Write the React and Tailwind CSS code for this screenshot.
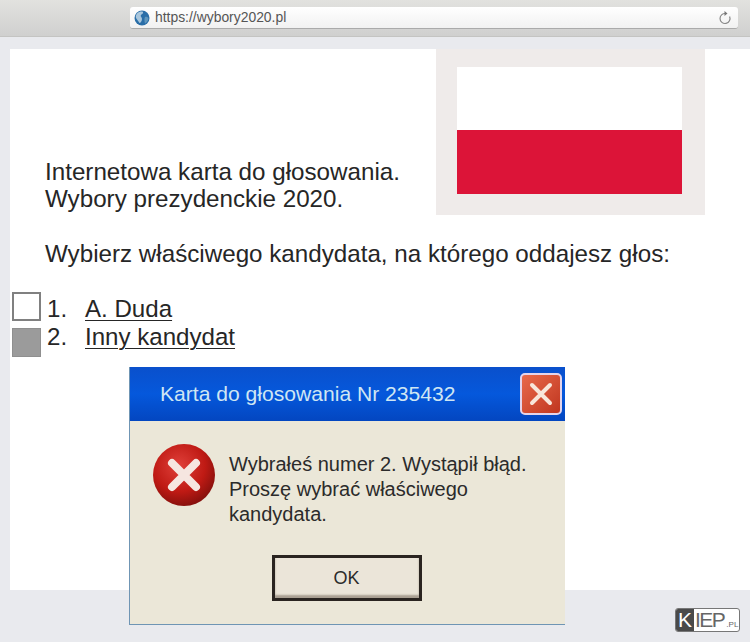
import React from 'react';

function Globe() {
  return (
    <svg width="16" height="16" viewBox="0 0 16 16" className="shrink-0">
      <circle cx="8" cy="8" r="7.5" fill="#2a6ea8" />
      <path d="M3 3.5 C5 1.5 8 1 9 2 C9.5 3.5 8 4 7 5 C6 6.5 8 7 8 9 C8 11 6.5 13 5.5 13 C4.5 11 3 10 2 8 C1.5 6 2 5 3 3.5 Z" fill="#a9c6dc" />
      <path d="M11 7 C12.5 6.5 14 7 14.5 8.5 C14 11 12.5 13 11 13.5 C10.5 11.5 10 9 11 7 Z" fill="#5f96bd" />
    </svg>
  );
}

function Reload() {
  return (
    <svg width="14" height="16" viewBox="0 0 14 16" fill="none" className="shrink-0">
      <path d="M8 3.6 A5 5 0 1 0 11.6 6.5" stroke="#8a8a8a" strokeWidth="1.2" />
      <path d="M6.5 1 L9.5 3.6 L6.5 6 Z" fill="#777" />
    </svg>
  );
}

function ErrorIcon() {
  return (
    <svg width="64" height="64" viewBox="0 0 64 64" className="shrink-0">
      <defs>
        <radialGradient id="err" cx="42%" cy="35%" r="70%">
          <stop offset="0%" stopColor="#e0403a" />
          <stop offset="60%" stopColor="#bf1a14" />
          <stop offset="100%" stopColor="#7e0f0c" />
        </radialGradient>
      </defs>
      <circle cx="32" cy="32" r="31" fill="url(#err)" />
      <path d="M20 20 L44 44 M44 20 L20 44" stroke="#f6e6e0" strokeWidth="8" strokeLinecap="round" />
    </svg>
  );
}

function CloseButton() {
  return (
    <div className="flex h-[42px] w-[42px] items-center justify-center rounded-[5px] border-2 border-[#e4d4ea] bg-gradient-to-br from-[#e8694a] to-[#c0351f]">
      <svg width="28" height="28" viewBox="0 0 28 28">
        <path d="M5 5 L23 23 M23 5 L5 23" stroke="#f8e6da" strokeWidth="4" strokeLinecap="round" />
      </svg>
    </div>
  );
}

export default function App() {
  return (
    <div className="relative flex h-[642px] w-[750px] flex-col overflow-hidden bg-[#e9eaee] font-['Liberation_Sans',Arial,sans-serif] text-[#262626]">
      {/* Browser bar */}
      <div className="flex h-[37px] shrink-0 items-start border-b border-[#c4c4c2] bg-gradient-to-b from-[#e2e2df] to-[#d0d0cf] pl-[130px] pr-[12px] pt-[7px]">
        <div className="flex h-[22px] flex-1 items-center rounded-[3px] border-b border-[#aaa] bg-gradient-to-b from-white to-[#f1f1f1] pl-[4px] pr-[6px] text-[13.9px] text-[#555]">
          <Globe />
          <span className="ml-[5px] flex-1">https://wybory2020.pl</span>
          <Reload />
        </div>
      </div>

      {/* Page */}
      <div className="ml-[10px] mt-[12px] h-[541px] bg-white">
        <div className="flex items-start">
          <div className="flex-1 pl-[35px] pt-[109px] text-[24.2px] leading-[27px]">
            <p>Internetowa karta do głosowania.</p>
            <p>Wybory prezydenckie 2020.</p>
          </div>
          <div className="mr-[45px] flex h-[166px] w-[269px] flex-col bg-[#efebea] pb-[21px] pl-[21px] pr-[23px] pt-[18px]">
            <div className="h-[63px] bg-white" />
            <div className="h-[64px] bg-[#dc1438]" />
          </div>
        </div>
        <p className="mt-[24px] pl-[35px] text-[24.2px] leading-[30px]">
          Wybierz właściwego kandydata, na którego oddajesz głos:
        </p>
        <div className="mt-[23px] flex items-start pl-[2px] text-[24.1px] leading-[28px]">
          <div className="flex flex-col gap-[7px]">
            <div className="h-[29px] w-[29px] border-2 border-[#808080] bg-white" />
            <div className="h-[29px] w-[29px] border border-[#8f8f8f] bg-[#9b9b9b]" />
          </div>
          <div className="ml-[6px] mt-[3px] grid grid-cols-[38px_auto]">
            <span>1.</span>
            <span className="justify-self-start underline decoration-1 underline-offset-[3px]">A. Duda</span>
            <span>2.</span>
            <span className="justify-self-start underline decoration-1 underline-offset-[3px]">Inny kandydat</span>
          </div>
        </div>
      </div>

      {/* Error dialog */}
      <div className="absolute left-[129px] top-[367px] flex h-[258px] w-[436px] flex-col border-b border-l border-[#6f95b4] bg-[#ebe7d8]">
        <div className="flex h-[54px] shrink-0 items-center justify-between bg-gradient-to-b from-[#0a50cc] via-[#0558dc] to-[#0346c0] pl-[30px] pr-[3px] text-[21.1px] text-[#cfe6f3]">
          <span>Karta do głosowania Nr 235432</span>
          <CloseButton />
        </div>
        <div className="flex items-start pl-[22px] pt-[22px]">
          <ErrorIcon />
          <p className="ml-[13px] pt-[9px] text-[20px] leading-[25px] text-[#2b2b2b]">
            Wybrałeś numer 2. Wystąpił błąd.
            <br />
            Proszę wybrać właściwego
            <br />
            kandydata.
          </p>
        </div>
        <div className="mt-auto flex justify-center pb-[23px] pr-[2px]">
          <button className="h-[46px] w-[150px] border-[3px] border-[#2a2420] bg-[#ebe5d9] text-[18px] text-[#2b2b2b] shadow-[inset_0_-3px_2px_#a99f92]">
            OK
          </button>
        </div>
      </div>

      {/* Watermark */}
      <div className="absolute left-[675px] top-[608px] flex h-[24px] w-[65px] items-center overflow-hidden rounded-[3px] border border-[#777] bg-white text-[#666]">
        <span className="flex h-full w-[18px] items-center justify-center bg-[#4a4a4a] text-[21px] text-white">K</span>
        <span className="ml-[1px] text-[21px] tracking-[-1.5px]">IEP</span>
        <span className="ml-[2px] mt-[9px] text-[8px]">.PL</span>
      </div>
    </div>
  );
}
